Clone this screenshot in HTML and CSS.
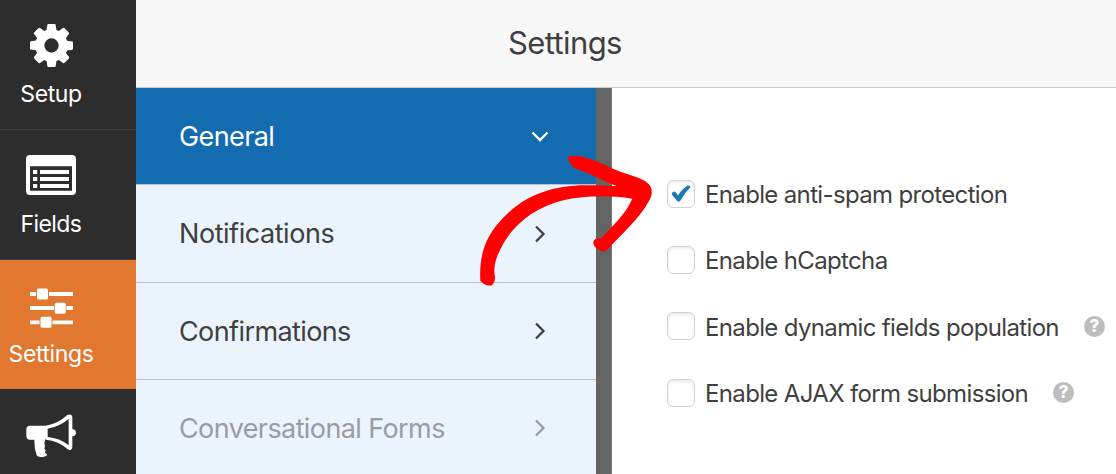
FILE: index.html
```html
<!DOCTYPE html>
<html lang="en">
<head>
  <meta charset="UTF-8">
  <meta name="viewport" content="width=device-width, initial-scale=1.0">
  <title>Settings</title>
  <link rel="stylesheet" href="styles.css">
</head>
<body>
  <div class="builder">
    <nav class="toolbar">
      <a class="tool">
        <svg class="icon-gear" width="43" height="43" viewBox="128 128 1536 1536"><path fill="#fff" d="M1152 896q0-106-75-181t-181-75-181 75-75 181 75 181 181 75 181-75 75-181zm512-109v222q0 12-8 23t-20 13l-185 28q-19 54-39 91 35 50 107 138 10 12 10 25t-9 23q-27 37-99 108t-94 71q-12 0-26-9l-138-108q-44 23-91 38-16 136-29 186-7 28-36 28h-222q-14 0-24.500-8.500t-11.500-21.500l-28-184q-49-16-90-37l-141 107q-10 9-25 9-14 0-25-11-126-114-165-168-7-10-7-23 0-12 8-23 15-21 51-66.500t54-70.500q-27-50-41-99l-183-27q-13-2-21-12.500t-8-23.500v-222q0-12 8-23t19-13l186-28q14-46 39-92-40-57-107-138-10-12-10-24 0-10 9-23 26-36 98.500-107.500t94.500-71.500q13 0 26 10l138 107q44-23 91-38 16-136 29-186 7-28 36-28h222q14 0 24.500 8.500t11.500 21.500l28 184q49 16 90 37l142-107q9-9 24-9 13 0 25 10 129 119 165 170 7 8 7 22 0 12-8 23-15 21-51 66.500t-54 70.500q26 50 41 98l183 28q13 2 21 12.500t8 23.500z"/></svg>
        <span class="setup">Setup</span>
      </a>
      <a class="tool">
        <svg class="icon-fields" width="50" height="40" viewBox="0 0 50 40">
          <path fill="#fff" fill-rule="evenodd" d="M4 0h42a4 4 0 0 1 4 4v32a4 4 0 0 1-4 4H4a4 4 0 0 1-4-4V4a4 4 0 0 1 4-4zM4 11.200v24.600h42V11.200z"/>
          <path stroke="#fff" stroke-width="4" d="M7 17h4.200M14 17h29M7 24h4.200M14 24h29M7 31h4.200M14 31h29"/>
        </svg>
        <span class="fields">Fields</span>
      </a>
      <a class="tool active">
        <svg class="icon-sliders" width="43" height="40" viewBox="0 0 43 40">
          <path stroke="#fff" stroke-width="3.800" d="M0 6h6M19 6h24M0 20h24M36.500 20H43M0 34.300h9.500M22.500 34.300H43"/>
          <g fill="#fff">
            <rect x="7" y=".5" width="11" height="11" rx="1.500"/>
            <rect x="24.800" y="14.700" width="11" height="11" rx="1.500"/>
            <rect x="10.500" y="28.800" width="11" height="11" rx="1.500"/>
          </g>
        </svg>
        <span class="settings">Settings</span>
      </a>
      <a class="tool">
        <svg class="icon-horn" width="50" height="44" viewBox="0 0 150 132">
          <path fill="#fff" d="M12 35H62V73H60Q53 86 57 96L55 104 59 109 57 116 64 122Q59 129 44 129 35 129 32 124 24 101 25 77H12Q1 77 1 65V47Q1 35 12 35z"/>
          <path fill="#fff" fill-rule="evenodd" d="M60 35Q96 29 124 3 138-2 139 10V45Q150 47 150 56T139 67V100Q137 113 125 106 98 80 60 77zM65 44V69Q101 72 128 94V15Q101 38 65 44z"/>
        </svg>
      </a>
    </nav>

    <div class="panel">
      <header><h1>Settings</h1></header>
      <div class="content">
        <aside class="menu">
          <a class="general">General <svg width="18" height="18" viewBox="0 0 18 18"><path d="M1.500 5.500l7.500 7.500 7.500-7.500"/></svg></a>
          <a class="notifications">Notifications <svg width="18" height="18" viewBox="0 0 18 18"><path d="M5 1.500l7.500 7.500-7.500 7.500"/></svg></a>
          <a class="confirmations">Confirmations <svg width="18" height="18" viewBox="0 0 18 18"><path d="M5 1.500l7.500 7.500-7.500 7.500"/></svg></a>
          <a class="conversational">Conversational Forms <svg width="18" height="18" viewBox="0 0 18 18"><path d="M5 1.500l7.500 7.500-7.500 7.500"/></svg></a>
        </aside>
        <div class="divider"></div>
        <section class="options">
          <label class="option">
            <span class="box"><svg width="20" height="18" viewBox="0 0 20 18"><path fill="#1e79b8" d="M3.200 6.600Q4.700 6.800 7 10.500 11 4 16.600.6 19 0 19.500 2 13.500 8 9.500 15.600 7.500 17.800 5.800 15.600L.7 9.500Q.6 7.200 3.200 6.600z"/></svg></span>
            <span class="text">Enable anti-spam protection</span>
          </label>
          <label class="option">
            <span class="box"></span>
            <span class="text">Enable hCaptcha</span>
          </label>
          <label class="option">
            <span class="box"></span>
            <span class="text">Enable dynamic fields population</span>
            <i class="help">?</i>
          </label>
          <label class="option">
            <span class="box"></span>
            <span class="text">Enable AJAX form submission</span>
            <i class="help">?</i>
          </label>
        </section>
      </div>
    </div>

    <svg class="arrow" viewBox="60 225 519 396"><path fill="#f00" d="M61 602C58 544 68 491 105 442C174 352 270 311 400 316L469 318C431 303 383 277 341 263C331 251 318 234 328 229C363 222 412 243 454 264C500 286 560 293 572 321C579 338 574 350 568 361C541 413 487 461 444 506C437 513 431 516 424 513C411 507 398 498 400 486C402 475 412 475 422 476C458 438 497 402 517 356C450 346 378 346 313 360C213 383 143 448 112 528C100 558 103 579 105 591C105 601 103 609 96 616C83 620 66 609 61 602z"/></svg>
  </div>
</body>
</html>
```
FILE: styles.css
```css
*{
  box-sizing: border-box;
}
body{
  margin: 0;
  font-family: Inter, "Liberation Sans", sans-serif;
  color: #3f3f3f;
  background-color: #fff;
  overflow: hidden;
}
.builder{
  position: relative;
  display: flex;
  width: 1116px;
  height: 474px;
  overflow: hidden;
}
.toolbar{
  width: 136px;
  flex-shrink: 0;
  background-color: #2d2d2d;
}
.tool{
  display: flex;
  flex-direction: column;
  align-items: center;
  height: 130px;
  padding: 24px 34px 0 0;
  border-bottom: 1px solid #444;
  color: #fff;
  font-size: 23px;
  line-height: 28px;
  letter-spacing: -0.4px;
}
.tool.active{
  height: 129px;
  background-color: #e27730;
  border-bottom: none;
}
.tool span{
  margin-top: 12px;
  white-space: nowrap;
}
.tool .setup{
  margin-top: 13px;
}
.icon-fields{
  margin-top: 1px;
}
.tool .fields{
  margin-top: 15px;
  letter-spacing: -0.6px;
}
.icon-sliders{
  margin-top: 4px;
}
.icon-horn{
  margin-top: 1px;
}
.panel{
  flex: 1;
}
header{
  height: 88px;
  background-color: #f7f7f7;
  border-bottom: 1px solid #ccc;
}
h1{
  margin: 0;
  padding: 24px 0 0 372px;
  font-size: 31px;
  line-height: 38px;
  font-weight: 400;
  letter-spacing: -0.6px;
}
.content{
  display: flex;
  height: 386px;
}
.menu{
  width: 460px;
}
.menu a{
  display: flex;
  align-items: center;
  justify-content: space-between;
  height: 97px;
  padding: 0 47px 0 43px;
  background-color: #ebf3fc;
  border-bottom: 1px solid #b5c1cd;
  font-size: 27px;
  letter-spacing: -0.6px;
}
.menu svg{
  fill: none;
  stroke: currentColor;
  stroke-width: 2.300;
}
.menu .general{
  background-color: #136bb0;
  color: #fff;
}
.menu .notifications{
  height: 98px;
  letter-spacing: -0.45px;
}
.menu .conversational{
  color: #999da2;
}
.divider{
  width: 16px;
  background-color: #646464;
  border-right: 1px solid #777;
}
.options{
  padding: 91px 0 0 55px;
}
.option{
  display: flex;
  align-items: center;
  height: 29px;
  margin-bottom: 37.400px;
  font-size: 24px;
  letter-spacing: -0.65px;
  white-space: nowrap;
}
.option .text{
  padding-top: 2px;
}
.box{
  display: flex;
  align-items: center;
  justify-content: center;
  width: 28px;
  height: 28px;
  margin-right: 10px;
  border: 1px solid #d2d2d2;
  border-radius: 6px;
  box-shadow: inset 0 2px 3px rgba(0, 0, 0, 0.08);
}
.help{
  width: 21px;
  height: 21px;
  margin-left: 25px;
  border-radius: 50%;
  background-color: #bdbdbd;
  color: #fff;
  font-size: 17px;
  font-style: normal;
  font-weight: 800;
  line-height: 21px;
  letter-spacing: 0;
  text-align: center;
}
.arrow{
  position: absolute;
  left: 480px;
  top: 155px;
  width: 173px;
  height: 132px;
}
```
